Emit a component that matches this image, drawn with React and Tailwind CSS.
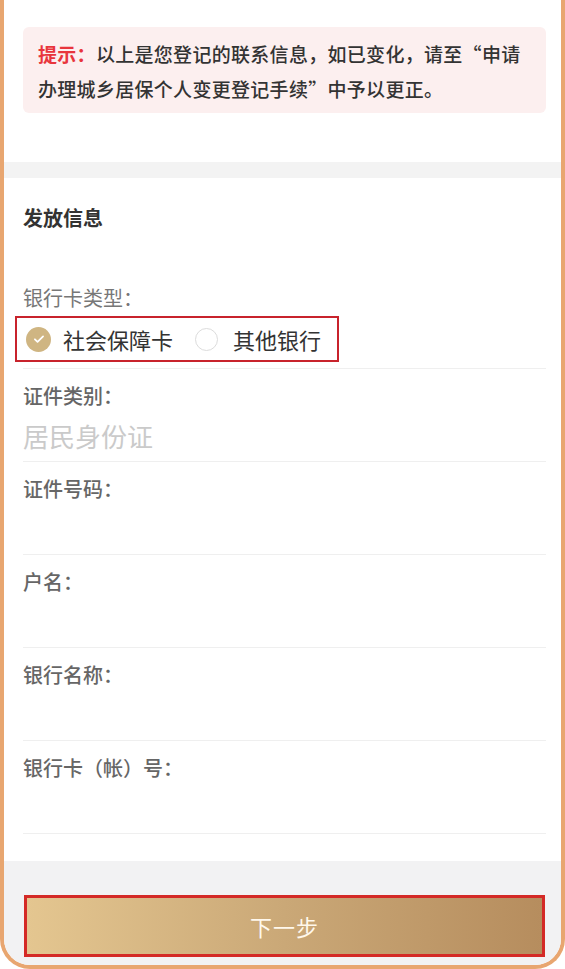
import React from 'react';

const fields = [
  { label: '证件类别：', value: '居民身份证' },
  { label: '证件号码：' },
  { label: '户名：' },
  { label: '银行名称：' },
  { label: '银行卡（帐）号：' },
];

function CheckCircle() {
  return (
    <span className="w-[25px] h-[25px] rounded-full bg-[#cfb582] flex items-center justify-center shrink-0">
      <svg width="14" height="14" viewBox="0 0 24 24" fill="none" stroke="white" strokeWidth="3" strokeLinecap="round" strokeLinejoin="round">
        <path d="M5 12.5l4.5 4.5L19 7.5" />
      </svg>
    </span>
  );
}

export default function App() {
  return (
    <div className="w-full h-[969px] flex flex-col bg-white border-x-4 border-b-4 border-[#e8a670] rounded-b-[30px] overflow-hidden font-['Noto_Sans_CJK_SC',sans-serif]">
      {/* contact tip */}
      <div className="h-[162px] pl-[19px] pr-[15px] pt-[27px] bg-white">
        <div className="bg-[#fcefef] rounded-[6px] pl-[15px] pr-[8px] pt-[9px] pb-[7px] text-[19px] tracking-[0.3px] leading-[35px] font-medium text-[#333]">
          <div className="whitespace-nowrap">
            <span className="text-[#e8353c] font-bold">提示：</span>以上是您登记的联系信息，如已变化，请至“申请
          </div>
          <div className="whitespace-nowrap">办理城乡居保个人变更登记手续”中予以更正。</div>
        </div>
      </div>

      <div className="h-[16px] bg-[#f3f3f3]" />

      {/* payout info */}
      <div className="pl-[19px] pr-[15px] pt-[26px] pb-[27px] bg-white">
        <div className="text-[20px] leading-[28px] font-bold text-[#333]">发放信息</div>

        <div className="border-b border-[#efefef] pb-[6px]">
          <div className="mt-[53px] text-[20px] leading-[26px] text-[#777]">银行卡类型：</div>
          <div className="mt-[5px] -ml-[8px] inline-flex items-center h-[46px] pl-[9px] pr-[16px] border-2 border-[#c8232c]">
            <CheckCircle />
            <span className="ml-[12px] text-[22px] text-[#333]">社会保障卡</span>
            <span className="ml-[22px] w-[23px] h-[23px] rounded-full border border-[#dcdcdc] shrink-0" />
            <span className="ml-[15px] text-[22px] text-[#333]">其他银行</span>
          </div>
        </div>

        {fields.map((f) => (
          <div key={f.label} className="h-[93px] flex flex-col pt-[14px] border-b border-[#efefef]">
            <div className="text-[20px] leading-[26px] text-[#666] font-medium">{f.label}</div>
            <div className="flex-1 flex items-center text-[26px] text-[#cacaca]">{f.value}</div>
          </div>
        ))}
      </div>

      {/* footer */}
      <div className="flex-1 bg-[#f2f2f3] pl-[20px] pr-[16px] pt-[34px]">
        <button className="w-full h-[62px] border-[3px] border-[#d42a26] bg-gradient-to-r from-[#e4c690] via-[#caa877] to-[#b68d5e] text-[22px] text-[#fff8ec] tracking-[1px]">
          下一步
        </button>
      </div>
    </div>
  );
}
